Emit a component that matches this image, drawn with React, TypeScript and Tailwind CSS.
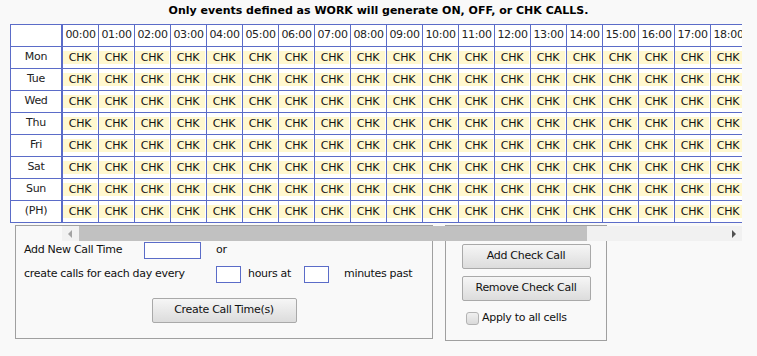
import React from "react";

const hours = Array.from({ length: 24 }, (_, i) => `${String(i).padStart(2, "0")}:00`);
const days = ["Mon", "Tue", "Wed", "Thu", "Fri", "Sat", "Sun", "(PH)"];

export default function App() {
  return (
    <div className="w-[757px] h-[356px] overflow-hidden bg-[#f9f9f9] font-['DejaVu_Sans',sans-serif] text-[11px] text-[#111] tracking-[-0.3px]">
      <div className="h-[24px] pt-[2px] text-center font-bold leading-[17px] text-black tracking-[0px]">
        Only events defined as WORK will generate ON, OFF, or CHK CALLS.
      </div>

      <div className="flex pl-[10px]">
        {/* day labels column */}
        <div className="w-[52px] self-start border-l border-t border-[#5b6cc8] bg-white">
          <div className="h-[22px] border-b border-r border-[#5b6cc8]" />
          {days.map((d) => (
            <div
              key={d}
              className="flex h-[22px] items-center justify-center border-b border-r border-[#5b6cc8] text-[#222]"
            >
              {d}
            </div>
          ))}
        </div>

        {/* scrolling hours grid */}
        <div className="w-[680px] overflow-hidden">
          <div className="w-[865px] border-l border-t border-[#5b6cc8] bg-white">
            <div className="flex">
              {hours.map((h) => (
                <div
                  key={h}
                  className="flex h-[22px] w-[36px] shrink-0 items-center justify-center border-b border-r border-[#5b6cc8] text-[#222]"
                >
                  {h}
                </div>
              ))}
            </div>
            {days.map((d) => (
              <div key={d} className="flex">
                {hours.map((h) => (
                  <div
                    key={h}
                    className="flex h-[22px] w-[36px] shrink-0 items-center border-b border-r border-[#5b6cc8] pr-[1px]"
                  >
                    <div className="flex h-[13px] w-full items-center justify-center bg-[#fff8cf] leading-none text-[#111]">
                      CHK
                    </div>
                  </div>
                ))}
              </div>
            ))}
          </div>

          {/* horizontal scrollbar */}
          <div className="relative z-10 mt-[3px] flex h-[15px] items-center bg-[#f1f1f1]">
            <div className="flex w-[17px] justify-center">
              <svg width="5" height="8" viewBox="0 0 5 8">
                <path d="M4 0 L0 4 L4 8 Z" fill="#a3a3a3" />
              </svg>
            </div>
            <div className="h-[15px] w-[508px] bg-[#c1c1c1]" />
            <div className="flex-1" />
            <div className="flex w-[17px] justify-center">
              <svg width="5" height="8" viewBox="0 0 5 8">
                <path d="M1 0 L5 4 L1 8 Z" fill="#505050" />
              </svg>
            </div>
          </div>
        </div>
      </div>

      {/* lower panels */}
      <div className="-mt-[16px] flex items-start gap-[12px] pl-[15px]">
        <div className="h-[114px] w-[418px] border border-[#a0a0a0] pl-[8px] pt-[16px]">
          <div className="flex h-[17px] items-center">
            <span className="w-[120px]">Add New Call Time</span>
            <div className="h-[17px] w-[57px] border border-[#5b6cc8] bg-white" />
            <span className="ml-[15px]">or</span>
          </div>
          <div className="mt-[7px] flex h-[17px] items-center">
            <span className="w-[192px]">create calls for each day every</span>
            <div className="h-[17px] w-[25px] border border-[#5b6cc8] bg-white" />
            <span className="ml-[7px] w-[56px]">hours at</span>
            <div className="h-[17px] w-[25px] border border-[#5b6cc8] bg-white" />
            <span className="ml-[15px]">minutes past</span>
          </div>
          <div className="mt-[15px] flex justify-center pr-[8px]">
            <button className="h-[25px] w-[145px] rounded-[2px] border border-[#a9a9a9] bg-gradient-to-b from-[#f6f6f6] to-[#dcdcdc] text-[11px] text-[#111]">
              Create Call Time(s)
            </button>
          </div>
        </div>

        <div className="h-[116px] w-[162px] border border-[#a0a0a0] pt-[18px]">
          <div className="flex flex-col items-center gap-[7px]">
            <button className="h-[25px] w-[129px] rounded-[2px] border border-[#a9a9a9] bg-gradient-to-b from-[#f6f6f6] to-[#dcdcdc] text-[11px] text-[#111]">
              Add Check Call
            </button>
            <button className="h-[25px] w-[129px] rounded-[2px] border border-[#a9a9a9] bg-gradient-to-b from-[#f6f6f6] to-[#dcdcdc] text-[11px] text-[#111]">
              Remove Check Call
            </button>
          </div>
          <label className="ml-[20px] mt-[9px] flex items-center gap-[3px]">
            <span className="h-[13px] w-[13px] rounded-[3px] border border-[#b3b3b3] bg-gradient-to-b from-[#f0f0f0] to-[#dadada]" />
            <span>Apply to all cells</span>
          </label>
        </div>
      </div>
    </div>
  );
}
